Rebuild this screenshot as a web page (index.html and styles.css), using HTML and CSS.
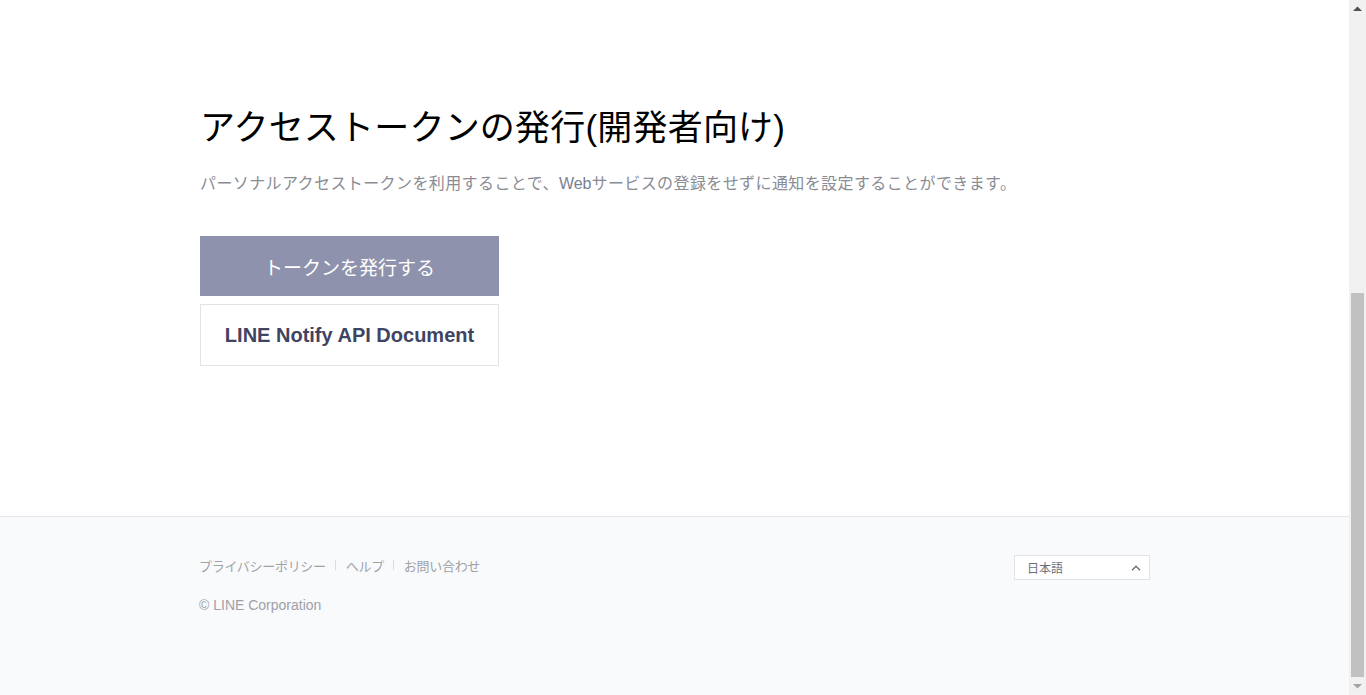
FILE: index.html
```html
<!DOCTYPE html>
<html lang="ja">
<head>
<meta charset="utf-8">
<title>LINE Notify</title>
<link rel="stylesheet" href="styles.css">
</head>
<body>
<div class="window">
  <div class="viewport">
    <div class="page">
      <div class="top-spacer"></div>
      <main class="main">
        <div class="container">
          <h1 class="title">アクセストークンの発行(開発者向け)</h1>
          <p class="desc">パーソナルアクセストークンを利用することで、<span class="desc-en">Web</span>サービスの登録をせずに通知を設定することができます。</p>
          <div class="actions">
            <a class="btn btn-primary" href="#">トークンを発行する</a>
            <a class="btn btn-outline" href="#">LINE Notify API Document</a>
          </div>
        </div>
      </main>
      <footer class="footer">
        <div class="container footer-inner">
          <div class="footer-left">
            <nav class="footer-links">
              <a href="#">プライバシーポリシー</a>
              <span class="sep"></span>
              <a href="#">ヘルプ</a>
              <span class="sep"></span>
              <a href="#">お問い合わせ</a>
            </nav>
            <p class="copyright">© LINE Corporation</p>
          </div>
          <div class="lang-select">
            <span>日本語</span>
            <svg class="chev" width="10" height="6" viewBox="0 0 10 6"><path d="M1 5.2 L5 1.2 L9 5.2" fill="none" stroke="#6b6e7a" stroke-width="1.4"/></svg>
          </div>
        </div>
      </footer>
    </div>
  </div>
  <div class="scrollbar" aria-hidden="true">
    <div class="sb-btn">
      <svg width="9" height="5" viewBox="0 0 9 5"><path d="M0 5 L4.5 0.5 L9 5 Z" fill="#505050"/></svg>
    </div>
    <div class="sb-track">
      <div class="sb-thumb"></div>
    </div>
    <div class="sb-btn">
      <svg width="9" height="5" viewBox="0 0 9 5"><path d="M0 0 L9 0 L4.5 4.5 Z" fill="#a3a3a3"/></svg>
    </div>
  </div>
</div>
</body>
</html>
```

FILE: styles.css
```css
html, body {
  margin: 0;
  padding: 0;
  height: 100%;
  overflow: hidden;
}
body {
  font-family: "Liberation Sans", "Noto Sans CJK JP", sans-serif;
  color: #000;
  background: #fff;
}
.window {
  display: flex;
  height: 100vh;
}
.viewport {
  flex: 1;
  min-width: 0;
  height: 100vh;
  overflow-y: scroll;
  display: flex;
  flex-direction: column-reverse;
  scrollbar-width: none;
}
.viewport::-webkit-scrollbar {
  display: none;
  width: 0;
}
.scrollbar {
  width: 17px;
  flex: none;
  display: flex;
  flex-direction: column;
  background: #f1f1f1;
}
.sb-btn {
  height: 17px;
  display: flex;
  align-items: center;
  justify-content: center;
}
.sb-track {
  flex: 1;
  display: flex;
  flex-direction: column;
  justify-content: flex-end;
  padding: 0 2px 1px;
}
.sb-thumb {
  height: 384px;
  background: #c1c1c1;
}
.page {
  flex: none;
}
.top-spacer {
  height: 312px;
}
.container {
  width: 951px;
  margin: 0 auto;
}
.main {
  padding: 107px 0 150px;
}
.title {
  margin: 0;
  font-size: 35px;
  letter-spacing: 0.2px;
  line-height: 41px;
  font-weight: normal;
  color: #000;
  padding-left: 1px;
}
.desc {
  margin: 24px 0 0;
  font-size: 16px;
  letter-spacing: 0.4px;
  line-height: 24px;
  color: #8a8c94;
  padding-left: 1px;
}
.desc-en {
  color: #7a8090;
  letter-spacing: 0;
}
.actions {
  margin-top: 40px;
  display: flex;
  flex-direction: column;
  gap: 8px;
  width: 299px;
  padding-left: 1px;
}
.btn {
  display: flex;
  align-items: center;
  justify-content: center;
  text-decoration: none;
  box-sizing: border-box;
  font-size: 20px;
}
.btn-primary {
  height: 60px;
  background: #8e92ad;
  color: #fff;
  font-size: 19px;
}
.btn-outline {
  height: 62px;
  border: 1px solid #e2e3e6;
  background: #fff;
  color: #3f4462;
  font-weight: bold;
}
.footer {
  border-top: 1px solid #e3e5e9;
  background: #f9fafb;
  padding: 38px 0 80px;
}
.footer-inner {
  display: flex;
  justify-content: space-between;
  align-items: flex-start;
}
.footer-links {
  display: flex;
  align-items: center;
  height: 20px;
  font-size: 13px;
  letter-spacing: -0.3px;
}
.footer-links a {
  color: #a0a2a8;
  text-decoration: none;
}
.sep {
  width: 1px;
  height: 10px;
  background: #dcdde1;
  margin: 0 10px 0 9px;
}
.copyright {
  margin: 20px 0 0;
  font-size: 14px;
  line-height: 20px;
  color: #9fa1a8;
}
.lang-select {
  width: 136px;
  height: 25px;
  box-sizing: border-box;
  border: 1px solid #e1e3e7;
  background: #fff;
  display: flex;
  align-items: center;
  justify-content: space-between;
  padding: 0 8px 0 12px;
  font-size: 12px;
  color: #6b6e7a;
}
.chev {
  display: block;
}
```
